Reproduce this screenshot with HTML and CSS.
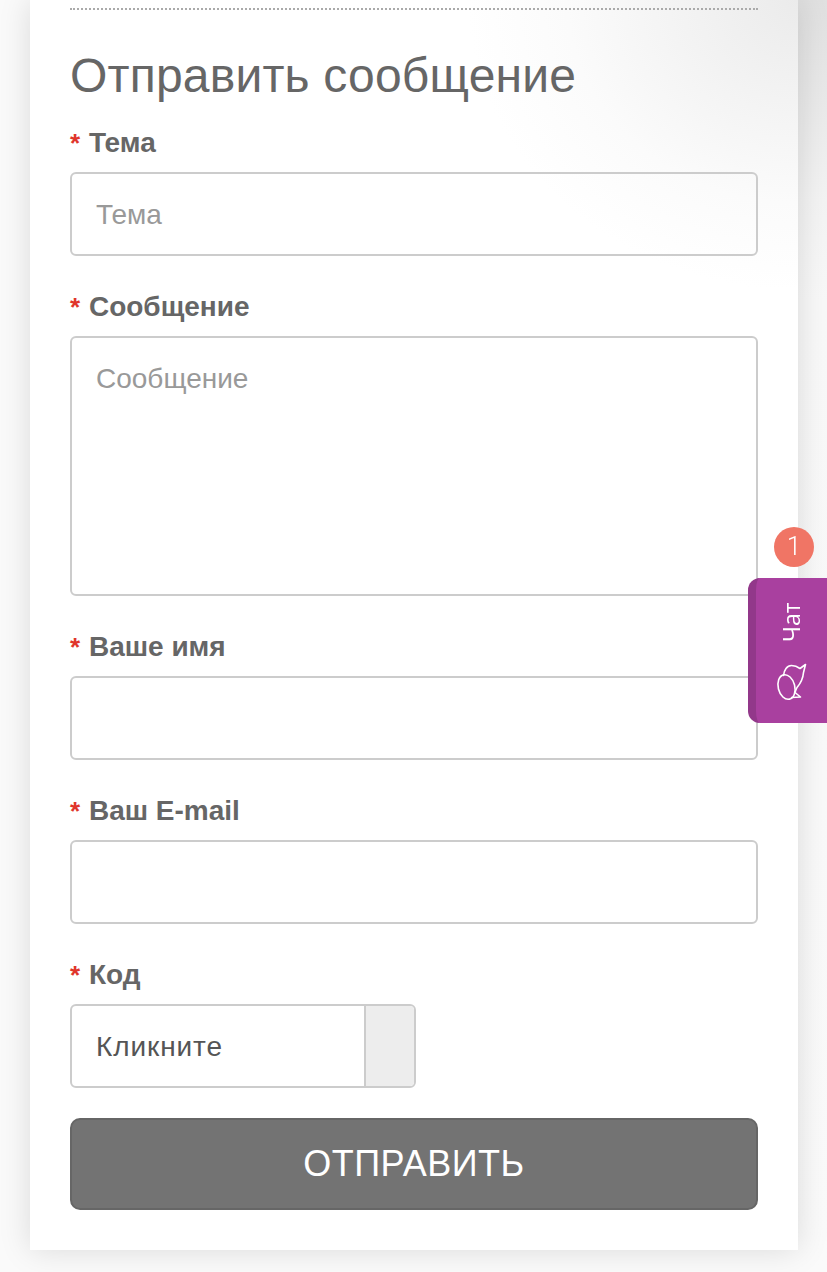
FILE: index.html
```html
<!DOCTYPE html>
<html lang="ru">
<head>
<meta charset="utf-8">
<title>Отправить сообщение</title>
<link rel="stylesheet" href="styles.css">
</head>
<body>
<main class="card">
  <div class="inner">
    <h1 class="title">Отправить сообщение</h1>
    <form class="form">
      <div class="field">
        <label class="label"><span class="req">*</span> Тема</label>
        <input class="input" type="text" placeholder="Тема">
      </div>
      <div class="field">
        <label class="label"><span class="req">*</span> Сообщение</label>
        <textarea class="input area" placeholder="Сообщение"></textarea>
      </div>
      <div class="field">
        <label class="label"><span class="req">*</span> Ваше имя</label>
        <input class="input" type="text">
      </div>
      <div class="field">
        <label class="label"><span class="req">*</span> Ваш E-mail</label>
        <input class="input" type="text">
      </div>
      <div class="field">
        <label class="label"><span class="req">*</span> Код</label>
        <div class="captcha">
          <span class="captcha-text">Кликните</span>
          <span class="captcha-box"></span>
        </div>
      </div>
      <button class="submit" type="button">ОТПРАВИТЬ</button>
    </form>
  </div>
</main>
<aside class="chat">
  <span class="badge">1</span>
  <span class="chat-text">Чат</span>
  <svg class="chat-icon" width="50" height="55" viewBox="0 0 50 55" fill="none" stroke="#fff" stroke-width="1.6" stroke-linejoin="round" stroke-linecap="round">
    <ellipse cx="19.500" cy="32" rx="8.300" ry="12.500" transform="rotate(-14 19.500 32)"/>
    <path d="M16.500 20.500 C17 15 20 10.500 24.500 10.500 C28 10.500 31 12 33 13.500 L38.500 9.500 L36.500 17.500 C36 24 33 29 30 32.500 C29 34.500 28.500 36 28 37.500 L33.500 42 L24.500 42.500"/>
  </svg>
</aside>
</body>
</html>
```
FILE: styles.css
```css
* { box-sizing: border-box; }
html, body { margin: 0; padding: 0; height: 1272px; overflow: hidden; }
body {
  background: linear-gradient(180deg, #e0e0e0 0, #e8e8e8 90px, #f3f3f3 200px, #f8f8f8 300px, #fafafa 100%) right top / 29px 100% no-repeat, #fafafa;
  font-family: "Liberation Sans", Arial, sans-serif;
  color: #666;
  padding: 0 29px 22px 30px;
}
.card {
  height: 1250px;
  background: radial-gradient(ellipse 330px 290px at 100% 0, #ebebeb 0, #f3f3f3 35%, #fbfbfb 70%, #ffffff 100%), #fff;
  box-shadow: 0 0 30px rgba(0, 0, 0, .13);
  padding: 8px 40px 0;
}
.inner { border-top: 2px dotted #aaa; padding-top: 37px; }
.title { margin: 0; font-size: 48px; line-height: 58px; font-weight: 400; color: #666; letter-spacing: .2px; }
.form { display: flex; flex-direction: column; margin-top: 22px; }
.field { margin-bottom: 35px; }
.label { display: block; font-size: 28px; line-height: 30px; font-weight: 700; color: #666; padding-top: 1px; margin-bottom: 14px; }
.req { color: #e0352b; font-size: 26px; margin-right: 1px; }
.input {
  display: block; width: 100%; height: 84px; padding: 2px 24px 0;
  border: 2px solid #ccc; border-radius: 6px; background: transparent;
  font: 28px "Liberation Sans", Arial, sans-serif; color: #555; outline: none;
}
.input::placeholder { color: #999; opacity: 1; }
.area { height: 260px; padding-top: 25px; resize: none; }
.captcha {
  display: flex; width: 346px; height: 84px;
  border: 2px solid #ccc; border-radius: 6px; overflow: hidden; background: #fff;
}
.captcha-text { flex: 1; padding-left: 24px; font-size: 28px; letter-spacing: .9px; line-height: 82px; color: #555; }
.captcha-box { width: 50px; border-left: 2px solid #ccc; background: #ededed; }
.submit {
  height: 92px; margin-top: -5px; width: 100%;
  background: #737373; border: 2px solid #666; border-radius: 10px;
  color: #fff; font: 36px "Liberation Sans", Arial, sans-serif; letter-spacing: .5px; padding: 0;
}
.chat {
  position: fixed; left: 748px; top: 578px; width: 79px; height: 145px;
  background: #a9409f;
  border-left: 8px solid #92388a;
  border-radius: 12px 0 0 12px;
  color: #fff;
}
.badge {
  position: absolute; left: 18px; top: -51px; width: 40px; height: 40px; border-radius: 50%;
  background: #f07565; color: #fff; font: 300 26px/38px Roboto, sans-serif; text-align: center;
}
.chat-text {
  position: absolute; left: 19px; top: 22px; width: 32px; height: 44px;
  writing-mode: vertical-rl; transform: rotate(180deg);
  font: 23px/32px "Open Sans", sans-serif; text-align: center;
}
.chat-icon { position: absolute; left: 11px; top: 77px; }
```
